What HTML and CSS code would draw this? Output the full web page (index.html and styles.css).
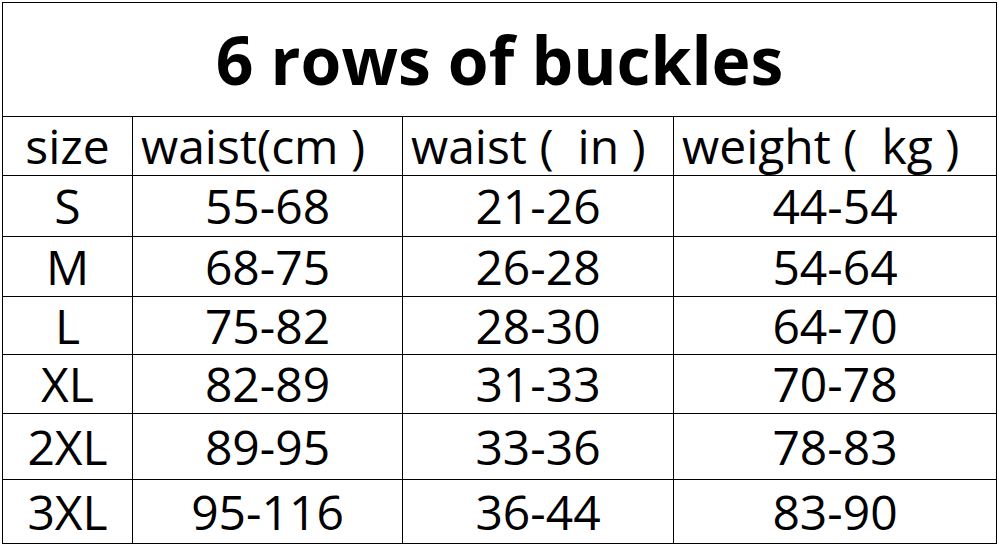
FILE: index.html
```html
<!DOCTYPE html>
<html lang="en">
<head>
    <meta charset="UTF-8">
    <title>Size Chart</title>
    <link rel="stylesheet" href="styles.css">
</head>
<body>
    <table class="chart">
        <colgroup>
            <col class="c-size">
            <col class="c-cm">
            <col class="c-in">
            <col class="c-kg">
        </colgroup>
        <tr class="r-title">
            <td colspan="4" class="title">6 rows of buckles</td>
        </tr>
        <tr class="r-head">
            <td>size</td>
            <td class="left">waist(cm&nbsp;)</td>
            <td class="left">waist (&ensp;in&nbsp;)</td>
            <td class="left">weight (&ensp;kg&nbsp;)</td>
        </tr>
        <tr class="r-s"><td>S</td><td>55-68</td><td>21-26</td><td>44-54</td></tr>
        <tr class="r-m"><td>M</td><td>68-75</td><td>26-28</td><td>54-64</td></tr>
        <tr class="r-l"><td>L</td><td>75-82</td><td>28-30</td><td>64-70</td></tr>
        <tr class="r-xl"><td>XL</td><td>82-89</td><td>31-33</td><td>70-78</td></tr>
        <tr class="r-2xl"><td>2XL</td><td>89-95</td><td>33-36</td><td>78-83</td></tr>
        <tr class="r-3xl"><td>3XL</td><td>95-116</td><td>36-44</td><td>83-90</td></tr>
    </table>
</body>
</html>
```

FILE: styles.css
```css
* {
    margin: 0;
    padding: 0;
    box-sizing: border-box;
}

body {
    background: #fff;
    color: #000;
    font-family: "Open Sans", "Noto Sans CJK SC", sans-serif;
    padding: 2px 0 0 2px;
}

.chart {
    border-collapse: collapse;
    table-layout: fixed;
    width: 994px;
}

.chart td {
    border: 1px solid #000;
    text-align: center;
    vertical-align: middle;
    font-size: 48px;
    line-height: 1.15;
    white-space: nowrap;
}

.chart td.left {
    text-align: left;
    padding-left: 8px;
}

.c-size { width: 130px; }
.c-cm { width: 270px; }
.c-in { width: 271px; }
.c-kg { width: 323px; }

.chart td.title {
    font-size: 66px;
    font-weight: 700;
    line-height: 1.2;
}

.r-title { height: 114px; }
.r-head { height: 59px; }
.r-s { height: 61px; }
.r-m { height: 60px; }
.r-l { height: 58px; }
.r-xl { height: 59px; }
.r-2xl { height: 66px; }
.r-3xl { height: 64px; }
```
